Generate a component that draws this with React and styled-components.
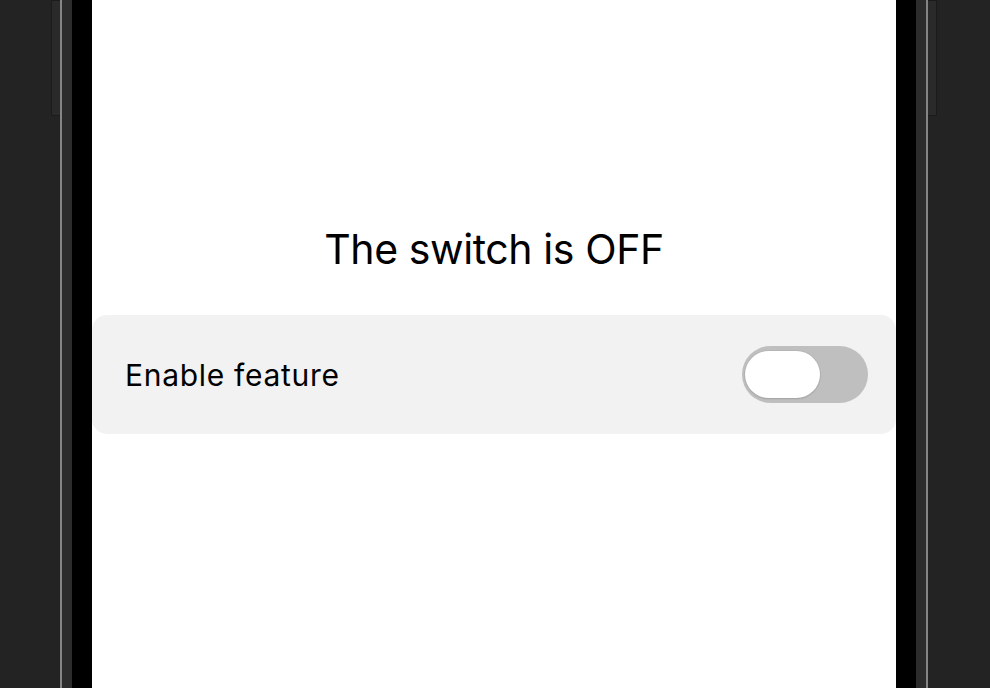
import { useState } from "react";
import styled, { createGlobalStyle, css } from "styled-components";

const GlobalStyle = createGlobalStyle`
  html, body {
    margin: 0;
    padding: 0;
    background: #232323;
    overflow: hidden;
  }
  * {
    box-sizing: border-box;
  }
`;

const Stage = styled.div`
  display: flex;
  flex-direction: row;
  align-items: stretch;
  width: 990px;
  height: 688px;
  background: #232323;
  font-family: Inter, Roboto, "Noto Sans", sans-serif;
`;

const Backdrop = styled.div`
  width: ${(p) => p.$width}px;
  flex-shrink: 0;
`;

const SideButton = styled.div`
  align-self: flex-start;
  width: 9px;
  height: 116px;
  flex-shrink: 0;
  background: #2a2a2a;
  border: 1px solid #1b1b1b;
  ${(p) =>
    p.$side === "left"
      ? css`
          border-right: none;
          border-radius: 0 0 0 2px;
        `
      : css`
          border-left: none;
          border-radius: 0 0 2px 0;
        `}
`;

const EdgeLine = styled.div`
  width: 2px;
  flex-shrink: 0;
  background: #858585;
`;

const FrameStrip = styled.div`
  width: 10px;
  flex-shrink: 0;
  background: #2c2c2c;
`;

const Bezel = styled.div`
  width: 20px;
  flex-shrink: 0;
  background: #000;
`;

const Screen = styled.div`
  width: 804px;
  flex-shrink: 0;
  background: #fff;
  display: flex;
  flex-direction: column;
  align-items: stretch;
  padding-top: 224px;
`;

const Title = styled.h1`
  margin: 0;
  text-align: center;
  font-size: 41px;
  font-weight: 400;
  line-height: 50px;
  letter-spacing: -0.4px;
  color: #000;
`;

const SettingRow = styled.div`
  margin-top: 41px;
  height: 119px;
  background: #f2f2f2;
  border-radius: 15px;
  display: flex;
  flex-direction: row;
  align-items: center;
  justify-content: space-between;
  padding: 0 28px 0 33px;
`;

const Label = styled.span`
  font-size: 30px;
  letter-spacing: 0.7px;
  color: #000;
`;

const Track = styled.button`
  position: relative;
  width: 126px;
  height: 57px;
  padding: 0;
  border: none;
  border-radius: 29px;
  background: ${(p) => (p.$on ? "#34c759" : "#bfbfbf")};
  cursor: pointer;
  transition: background 0.2s;
`;

const Thumb = styled.span`
  position: absolute;
  top: 5px;
  left: ${(p) => (p.$on ? "48px" : "3px")};
  width: 75px;
  height: 47px;
  border-radius: 24px;
  background: #fff;
  box-shadow: 0 0 0 1px rgba(0, 0, 0, 0.04), 0 1px 2px rgba(0, 0, 0, 0.12);
  transition: left 0.2s;
`;

const App = () => {
  const [on, setOn] = useState(false);

  return (
    <>
      <GlobalStyle />
      <Stage>
        <Backdrop $width={51} />
        <SideButton $side="left" />
        <EdgeLine />
        <FrameStrip />
        <Bezel />
        <Screen>
          <Title>The switch is {on ? "ON" : "OFF"}</Title>
          <SettingRow>
            <Label>Enable feature</Label>
            <Track $on={on} onClick={() => setOn(!on)} aria-label="Enable feature">
              <Thumb $on={on} />
            </Track>
          </SettingRow>
        </Screen>
        <Bezel />
        <FrameStrip />
        <EdgeLine />
        <SideButton $side="right" />
        <Backdrop $width={53} />
      </Stage>
    </>
  );
};

export default App;
